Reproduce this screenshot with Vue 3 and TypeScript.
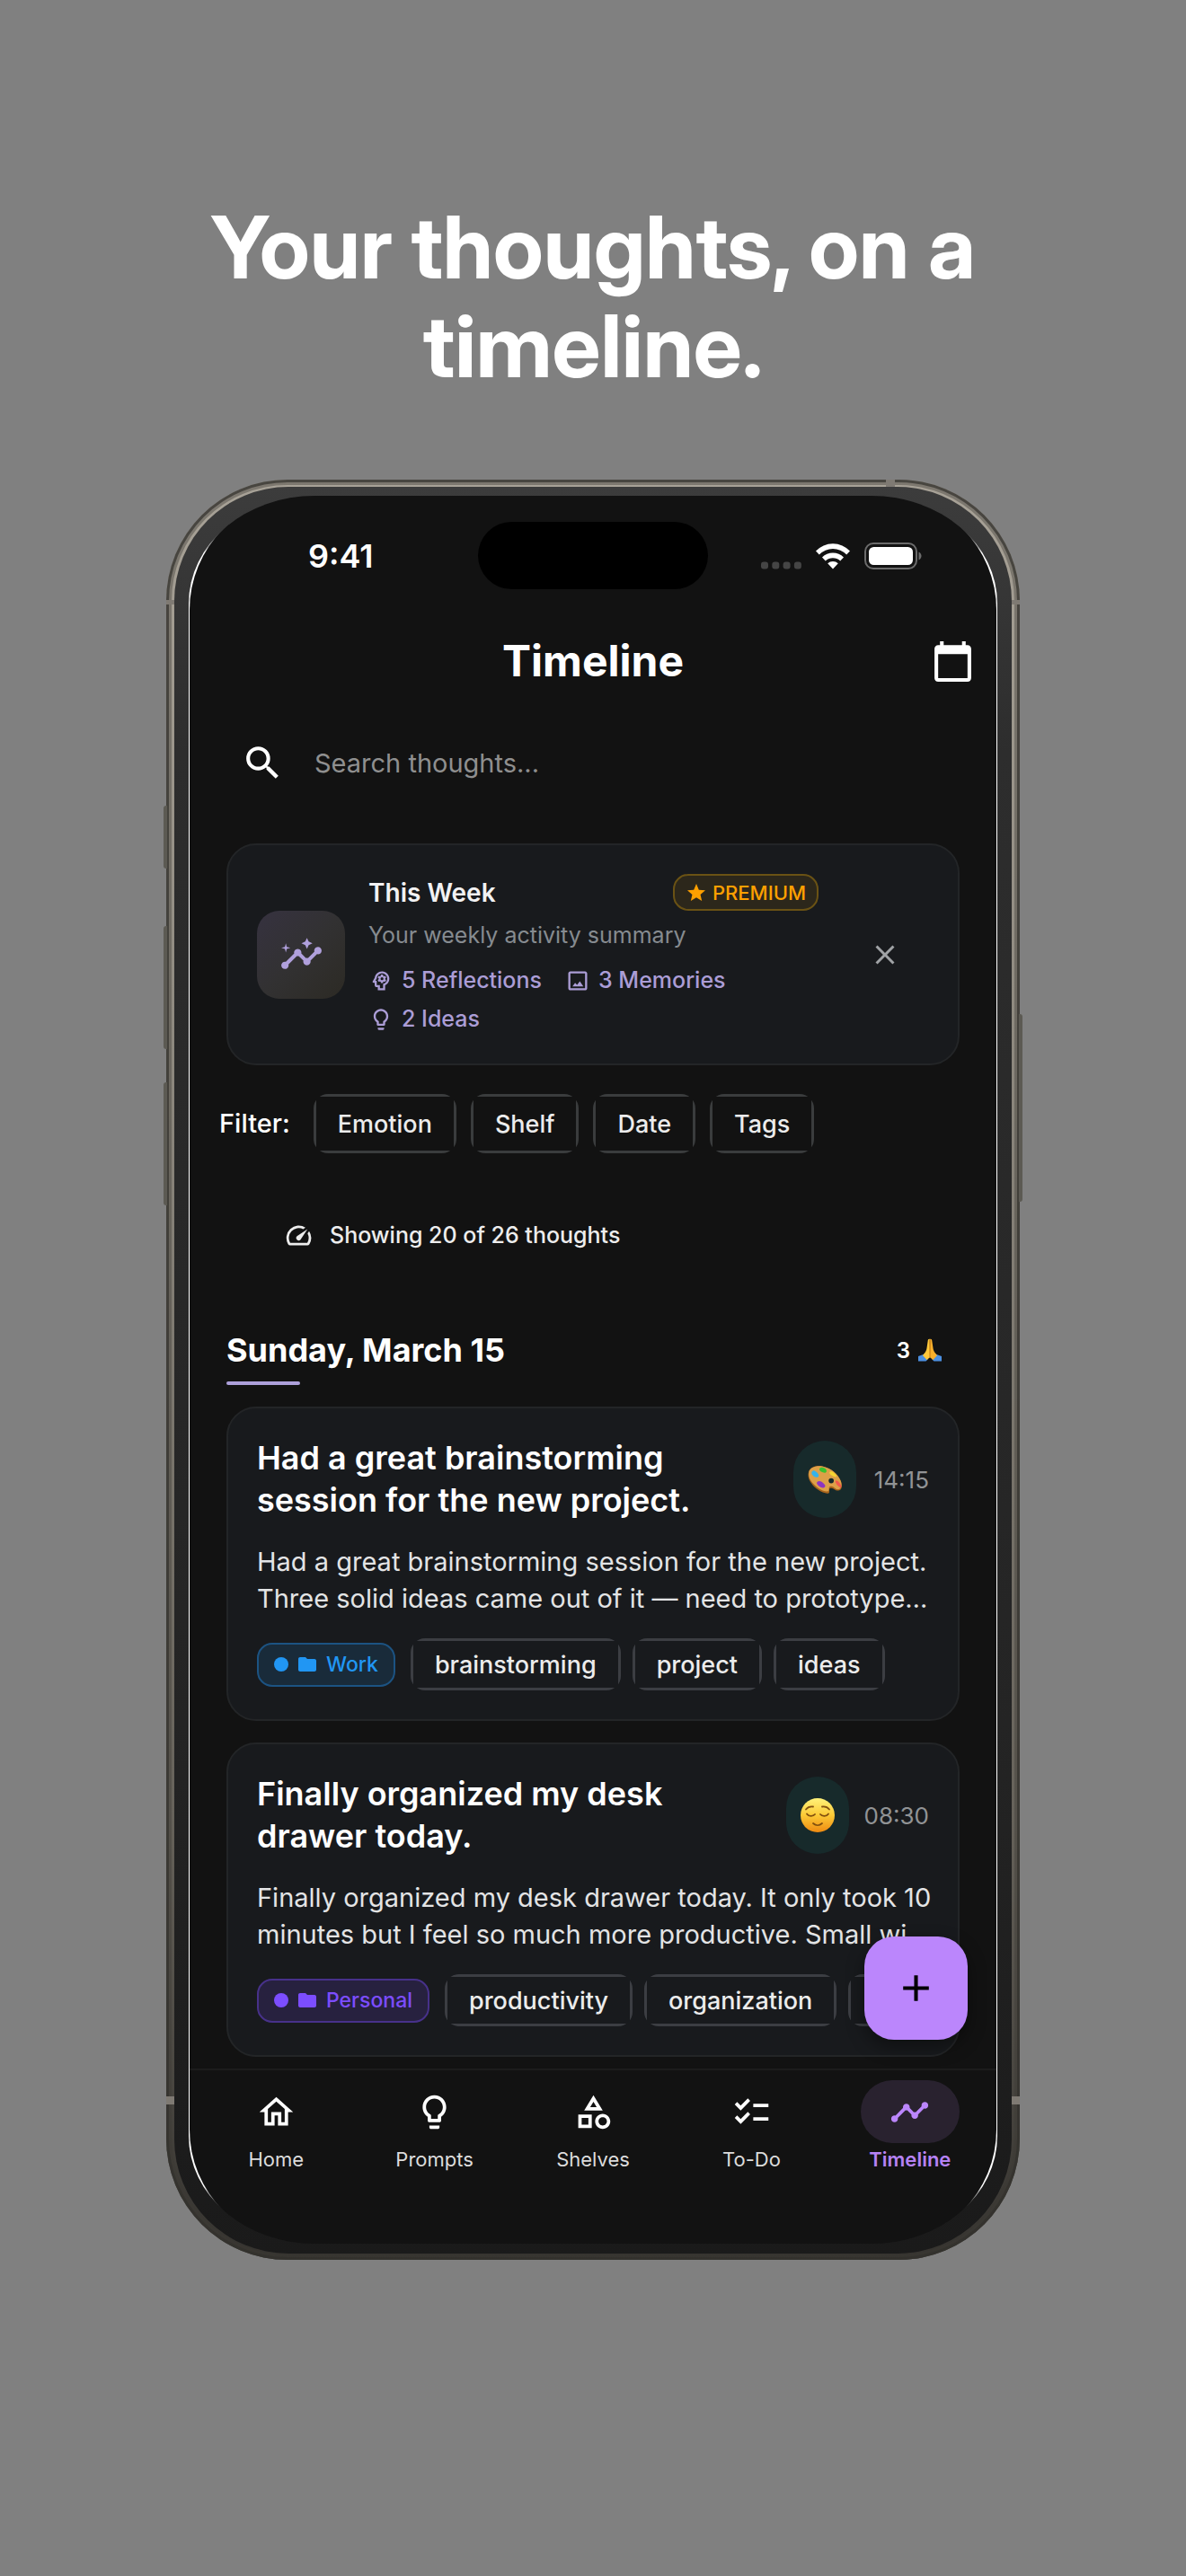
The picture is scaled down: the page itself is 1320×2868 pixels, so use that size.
<script setup lang="ts">
import { ref } from 'vue'

type Mood = 'palette' | 'relieved'

interface Thought {
  title: string[]
  body: string[]
  time: string
  mood: Mood
  shelf: string
  shelfTone: 'work' | 'personal'
  tags: string[]
  moreTags: boolean
}

const icons = {
  search:
    'M15.5 14h-.79l-.28-.27A6.471 6.471 0 0 0 16 9.5 6.5 6.5 0 1 0 9.5 16c1.61 0 3.09-.59 4.23-1.57l.27.28v.79l5 4.99L20.49 19l-4.99-5zm-6 0C7.01 14 5 11.99 5 9.5S7.01 5 9.5 5 14 7.01 14 9.5 11.99 14 9.5 14z',
  calendar:
    'M20 3h-1V1h-2v2H7V1H5v2H4c-1.1 0-2 .9-2 2v16c0 1.1.9 2 2 2h16c1.1 0 2-.9 2-2V5c0-1.1-.9-2-2-2zm0 18H4V8h16v13z',
  insights:
    'M21 8c-1.45 0-2.26 1.44-1.93 2.51l-3.55 3.56c-.3-.09-.74-.09-1.04 0l-2.55-2.55C12.27 10.45 11.46 9 10 9c-1.45 0-2.27 1.44-1.93 2.52l-4.56 4.55C2.44 15.74 1 16.55 1 18c0 1.1.9 2 2 2 1.45 0 2.26-1.44 1.93-2.51l4.55-4.56c.3.09.74.09 1.04 0l2.55 2.55C12.73 16.55 13.54 18 15 18c1.45 0 2.27-1.44 1.93-2.52l3.56-3.55C21.56 12.26 23 11.45 23 10c0-1.1-.9-2-2-2zM15 9l.94-2.07L18 6l-2.06-.93L15 3l-.92 2.07L12 6l2.08.93zM3.5 11 4 9l2-.5L4 8l-.5-2L3 8l-2 .5L3 9z',
  mind:
    'M19.94 9.06c-.43-3.27-3.23-5.86-6.53-6.05C13.27 3 13.14 3 13 3 9.47 3 6.57 5.61 6.08 9l-1.93 3.48c-.41.66.07 1.52.85 1.52h1v2c0 1.1.9 2 2 2h1v3h7v-4.68c2.62-1.25 4.35-4.08 3.94-7.26zm-5.05 5.57-.89.42V19h-3v-3H8v-4H6.7l1.33-2.33C8.21 7.06 10.35 5 13 5c2.76 0 5 2.24 5 5 0 2.09-1.29 3.88-3.11 4.63zM15.82 7.22l-1 .4c-.21-.16-.43-.29-.67-.39L14 6.17c-.02-.12-.13-.21-.25-.21h-1.6c-.13 0-.24.09-.26.21l-.15 1.06c-.24.1-.47.23-.67.39l-1-.4c-.11-.04-.24 0-.31.11l-.8 1.38c-.05.11-.03.25.07.33l.85.66c-.02.13-.04.26-.04.39s.01.26.03.39l-.84.66c-.1.08-.12.21-.06.32l.8 1.38c.06.11.19.16.31.12l.99-.4c.21.16.43.29.68.39l.14 1.06c.02.12.13.21.26.21h1.6c.12 0 .23-.09.26-.21l.14-1.06c.24-.1.47-.23.68-.39l.99.4c.12.05.25 0 .31-.12l.8-1.38c.06-.11.04-.24-.06-.32l-.83-.66c.02-.13.03-.26.03-.39 0-.14-.01-.27-.02-.39l.84-.66c.1-.08.12-.22.06-.33l-.8-1.38c-.06-.12-.18-.16-.31-.12zM13 11.4a1.4 1.4 0 1 1 0-2.8 1.4 1.4 0 0 1 0 2.8z',
  image:
    'M19 5v14H5V5h14m0-2H5c-1.1 0-2 .9-2 2v14c0 1.1.9 2 2 2h14c1.1 0 2-.9 2-2V5c0-1.1-.9-2-2-2zm-5 9.5-2.6 3.4-1.9-2L7 17.3h10.4L14 12.5z',
  bulb:
    'M9 21c0 .55.45 1 1 1h4c.55 0 1-.45 1-1v-1H9v1zm3-19C8.14 2 5 5.14 5 9c0 2.38 1.19 4.47 3 5.74V17c0 .55.45 1 1 1h6c.55 0 1-.45 1-1v-2.26c1.81-1.27 3-3.36 3-5.74 0-3.86-3.14-7-7-7zm2.85 11.1-.85.6V16h-4v-2.3l-.85-.6C7.8 12.16 7 10.63 7 9c0-2.76 2.24-5 5-5s5 2.24 5 5c0 1.63-.8 3.16-2.15 4.1z',
  star: 'M12 17.27 18.18 21l-1.64-7.03L22 9.24l-7.19-.61L12 2 9.19 8.63 2 9.24l5.46 4.73L5.82 21z',
  close:
    'M19 6.41 17.59 5 12 10.59 6.41 5 5 6.41 10.59 12 5 17.59 6.41 19 12 13.41 17.59 19 19 17.59 13.41 12z',
  speed:
    'm20.38 8.57-1.23 1.85a8 8 0 0 1-.22 7.58H5.07A8 8 0 0 1 15.58 6.85l1.85-1.23A10 10 0 0 0 3.35 19a2 2 0 0 0 1.72 1h13.85a2 2 0 0 0 1.74-1 10 10 0 0 0-.27-10.44zm-9.79 6.84a2 2 0 0 0 2.83 0l5.66-8.49-8.49 5.66a2 2 0 0 0 0 2.83z',
  folder:
    'M10 4H4c-1.1 0-1.99.9-1.99 2L2 18c0 1.1.9 2 2 2h16c1.1 0 2-.9 2-2V8c0-1.1-.9-2-2-2h-8l-2-2z',
  add: 'M19 13h-6v6h-2v-6H5v-2h6V5h2v6h6v2z',
  home: 'm12 5.69 5 4.5V18h-2v-6H9v6H7v-7.81l5-4.5M12 3 2 12h3v8h6v-6h2v6h6v-8h3L12 3z',
  shelves:
    'm12 2-5.5 9h11L12 2zm0 3.84L13.93 9h-3.87L12 5.84zM17.5 13c-2.49 0-4.5 2.01-4.5 4.5s2.01 4.5 4.5 4.5 4.5-2.01 4.5-4.5-2.01-4.5-4.5-4.5zm0 7c-1.38 0-2.5-1.12-2.5-2.5s1.12-2.5 2.5-2.5 2.5 1.12 2.5 2.5-1.12 2.5-2.5 2.5zM3 21.5h8v-8H3v8zm2-6h4v4H5v-4z',
  checklist:
    'M22 7h-9v2h9V7zm0 8h-9v2h9v-2zM5.54 11 2 7.46l1.41-1.41 2.12 2.12 4.24-4.24 1.41 1.41L5.54 11zm0 8L2 15.46l1.41-1.41 2.12 2.12 4.24-4.24 1.41 1.41L5.54 19z',
  timeline:
    'M23 8c0 1.1-.9 2-2 2-.18 0-.35-.02-.51-.07l-3.56 3.55c.05.16.07.34.07.52 0 1.1-.9 2-2 2s-2-.9-2-2c0-.18.02-.36.07-.52l-2.55-2.55c-.16.05-.34.07-.52.07s-.36-.02-.52-.07l-4.55 4.56c.05.16.07.33.07.51 0 1.1-.9 2-2 2s-2-.9-2-2 .9-2 2-2c.18 0 .35.02.51.07l4.56-4.55C8.02 9.36 8 9.18 8 9c0-1.1.9-2 2-2s2 .9 2 2c0 .18-.02.36-.07.52l2.55 2.55c.16-.05.34-.07.52-.07s.36.02.52.07l3.55-3.56C19.02 8.35 19 8.18 19 8c0-1.1.9-2 2-2s2 .9 2 2z',
}

const query = ref('')

const stats = [
  { icon: icons.mind, label: '5 Reflections' },
  { icon: icons.image, label: '3 Memories' },
  { icon: icons.bulb, label: '2 Ideas' },
]

const filters = ['Emotion', 'Shelf', 'Date', 'Tags']

const thoughts: Thought[] = [
  {
    title: ['Had a great brainstorming', 'session for the new project.'],
    body: [
      'Had a great brainstorming session for the new project.',
      'Three solid ideas came out of it — need to prototype…',
    ],
    time: '14:15',
    mood: 'palette',
    shelf: 'Work',
    shelfTone: 'work',
    tags: ['brainstorming', 'project', 'ideas'],
    moreTags: false,
  },
  {
    title: ['Finally organized my desk', 'drawer today.'],
    body: [
      'Finally organized my desk drawer today. It only took 10',
      'minutes but I feel so much more productive. Small wi…',
    ],
    time: '08:30',
    mood: 'relieved',
    shelf: 'Personal',
    shelfTone: 'personal',
    tags: ['productivity', 'organization'],
    moreTags: true,
  },
]

const tabs = [
  { icon: icons.home, label: 'Home' },
  { icon: icons.bulb, label: 'Prompts' },
  { icon: icons.shelves, label: 'Shelves' },
  { icon: icons.checklist, label: 'To-Do' },
  { icon: icons.timeline, label: 'Timeline' },
]
const activeTab = ref('Timeline')
</script>

<template>
  <div class="page">
    <h1 class="headline">Your thoughts, on a<br />timeline.</h1>

    <div class="phone">
      <i class="key key-action"></i>
      <i class="key key-up"></i>
      <i class="key key-down"></i>
      <i class="key key-power"></i>
      <i class="band band-top"></i>
      <i class="band band-left band-high"></i>
      <i class="band band-right band-high"></i>
      <i class="band band-left band-low"></i>
      <i class="band band-right band-low"></i>

      <div class="bezel">
        <div class="glass">
          <div class="screen">
            <div class="status">
              <span class="clock">9:41</span>
              <span class="island"></span>
              <span class="signals">
                <svg class="dots" viewBox="0 0 45 30">
                  <rect v-for="n in 4" :key="n" :x="(n - 1) * 12.3" y="21.5" width="8" height="8" rx="3" />
                </svg>
                <svg class="wifi" viewBox="0 0 40 30">
                  <path d="M1 9.5a26 26 0 0 1 38 0l-3.8 4a21 21 0 0 0-30.4 0z" />
                  <path d="M8 16.4a17 17 0 0 1 24 0l-3.8 4a12 12 0 0 0-16.4 0z" />
                  <path d="M14.2 23.2a8.5 8.5 0 0 1 11.6 0L20 29.5z" />
                </svg>
                <svg class="battery" viewBox="0 0 64 30">
                  <rect x="1" y="1" width="57" height="28" rx="9" fill="none" stroke="#6b6b6b" stroke-width="2" />
                  <rect x="5" y="5" width="49" height="20" rx="5.5" fill="#fff" />
                  <path d="M60.5 10.5c2 1 3 2.6 3 4.5s-1 3.5-3 4.5z" fill="#6b6b6b" />
                </svg>
              </span>
            </div>

            <main class="content">
              <header class="topbar">
                <h2>Timeline</h2>
                <button class="plain" type="button" aria-label="Pick a date">
                  <svg class="icon-lg" viewBox="0 0 24 24"><path :d="icons.calendar" /></svg>
                </button>
              </header>

              <label class="search">
                <svg class="icon-lg" viewBox="0 0 24 24"><path :d="icons.search" /></svg>
                <input v-model="query" type="text" placeholder="Search thoughts..." aria-label="Search thoughts" />
              </label>

              <section class="card week">
                <div class="week-icon">
                  <svg class="icon-lg" viewBox="0 0 24 24"><path :d="icons.insights" /></svg>
                </div>
                <div class="week-body">
                  <div class="week-top">
                    <h3>This Week</h3>
                    <span class="premium">
                      <svg viewBox="0 0 24 24"><path :d="icons.star" /></svg>PREMIUM
                    </span>
                  </div>
                  <p class="week-sub">Your weekly activity summary</p>
                  <ul class="stats">
                    <li v-for="stat in stats" :key="stat.label">
                      <svg viewBox="0 0 24 24"><path :d="stat.icon" fill-rule="evenodd" /></svg>{{ stat.label }}
                    </li>
                  </ul>
                </div>
                <button class="plain dismiss" type="button" aria-label="Dismiss">
                  <svg viewBox="0 0 24 24"><path :d="icons.close" /></svg>
                </button>
              </section>

              <div class="filters">
                <span class="filters-label">Filter:</span>
                <button v-for="name in filters" :key="name" class="chip" type="button">
                  <span>{{ name }}</span>
                </button>
              </div>

              <p class="count">
                <svg viewBox="0 0 24 24"><path :d="icons.speed" /></svg>Showing 20 of 26 thoughts
              </p>

              <section class="day">
                <header class="day-head">
                  <h3>Sunday, March 15</h3>
                  <span class="day-count">
                    3
                    <svg viewBox="0 0 26 26" role="img" aria-label="Folded hands">
                      <path d="M0 20 7 17.5l4 5.5-2.5 2.5H0zM26 20l-7-2.5-4 5.5 2.5 2.5H26z" fill="#4c8fe0" />
                      <path d="M12.8.8c-1.3-.4-2 .6-2.1 2L9.5 11c-.3 2-1 3.6-2.5 5.6l-2 2.4 4.5 5 3.5-2.8z" fill="#ffc83a" />
                      <path d="M13.2.8c1.3-.4 2 .6 2.1 2L16.5 11c.3 2 1 3.6 2.5 5.6l2 2.4-4.5 5-3.5-2.8z" fill="#f9b02b" />
                      <path d="M13 2v19" stroke="#c77a12" stroke-width="1" />
                    </svg>
                  </span>
                </header>
                <div class="day-rule"></div>

                <article v-for="thought in thoughts" :key="thought.time" class="card thought">
                  <div class="thought-head">
                    <h4>{{ thought.title[0] }}<br />{{ thought.title[1] }}</h4>
                    <span class="mood">
                      <svg v-if="thought.mood === 'palette'" viewBox="0 0 42 34" role="img" aria-label="Creative">
                        <path
                          d="M2 9C3 3 10 0 18 1.5c10 2 19 9 22 18 2 6 .5 10-3 10.5-4 .6-5.5-3.5-9-3-3.3.5-1 3.5-2 5.5-1.5 2.2-8 0-13-3.5C6 24 0 16 2 9z"
                          fill="#a8641c"
                        />
                        <path
                          d="M2.5 8C4 3 10 .5 18 1.5c10 2 18 8.5 21.5 17 2 5.5.8 9.3-2.5 10-4 .6-5.5-4-9-3.5-3.3.5-1.5 3.5-2.5 5.2-1.5 1.8-7.5 0-12.5-3.5C6 22 1 15 2.5 8z"
                          fill="#dda048"
                        />
                        <circle cx="28.5" cy="18.5" r="3" fill="#15292a" />
                        <path d="M6 8c2-3 4-1 6 1s3 5 0 5.5S4 11 6 8z" fill="#35b3ea" />
                        <path d="M15 4c2-2 4-1 6 0s3 4 1 5-9-2-7-5z" fill="#3cc32e" />
                        <path d="M27 8c2-1.5 5 1 7 3.5s-1 3-3 2-6-3.5-4-5.5z" fill="#f6d531" />
                        <path d="M34 18c2 0 5 3 6 6s-1 3-3 1-5-6-3-7z" fill="#f2594c" />
                        <path d="M12 20c2-2 5-1 7 1s4 4 1 5.5-10-4-8-6.5z" fill="#8d35c0" />
                      </svg>
                      <svg v-else viewBox="0 0 40 40" role="img" aria-label="Relieved">
                        <defs>
                          <linearGradient id="face" x1="0" y1="0" x2="0" y2="1">
                            <stop offset="0" stop-color="#fff27a" />
                            <stop offset=".5" stop-color="#fcca36" />
                            <stop offset="1" stop-color="#ee8a12" />
                          </linearGradient>
                        </defs>
                        <circle cx="20" cy="20" r="19" fill="url(#face)" />
                        <g fill="none" stroke="#82500f" stroke-width="1.8" stroke-linecap="round">
                          <path d="M7 13.5c2-2.5 5-3.5 8-3M33 13.5c-2-2.5-5-3.5-8-3" />
                          <path d="M8 18.5c2 3 7 3 9 .5M32 18.5c-2 3-7 3-9 .5" />
                          <path d="M15 29c3 2.8 7 2.8 10 0" />
                        </g>
                      </svg>
                    </span>
                    <time>{{ thought.time }}</time>
                  </div>
                  <p class="thought-body">{{ thought.body[0] }}<br />{{ thought.body[1] }}</p>
                  <div class="tags">
                    <span class="shelf" :class="thought.shelfTone">
                      <i></i>
                      <svg viewBox="0 0 24 24"><path :d="icons.folder" /></svg>
                      <span>{{ thought.shelf }}</span>
                    </span>
                    <button v-for="tag in thought.tags" :key="tag" class="chip chip-tag" type="button">
                      <span>{{ tag }}</span>
                    </button>
                    <span v-if="thought.moreTags" class="chip chip-tag chip-more"><span></span></span>
                  </div>
                </article>
              </section>

              <button class="fab" type="button" aria-label="New thought">
                <svg class="icon-lg" viewBox="0 0 24 24"><path :d="icons.add" /></svg>
              </button>
            </main>

            <nav class="tabs">
              <button
                v-for="tab in tabs"
                :key="tab.label"
                type="button"
                class="tab"
                :class="{ active: tab.label === activeTab }"
                @click="activeTab = tab.label"
              >
                <span class="pill">
                  <svg viewBox="0 0 24 24"><path :d="tab.icon" /></svg>
                </span>
                {{ tab.label }}
              </button>
            </nav>
          </div>
        </div>
      </div>
    </div>
  </div>
</template>

<style>
body {
  margin: 0;
  background: #808080;
}
</style>

<style scoped>
.page {
  box-sizing: border-box;
  min-height: 100vh;
  padding: 220px 185px 120px;
  background: #808080;
  font-family: Inter, Roboto, 'Liberation Sans', sans-serif;
  color: #fff;
}

h1,
h2,
h3,
h4,
p,
ul {
  margin: 0;
  padding: 0;
}

button,
input {
  font: inherit;
  color: inherit;
  border: 0;
  background: none;
  margin: 0;
  padding: 0;
}

svg {
  display: block;
  flex: none;
  fill: currentColor;
}

.icon-lg {
  width: 49px;
  height: 49px;
}

.headline {
  font-family: 'Inter Display', Inter, Roboto, sans-serif;
  font-size: 96px;
  line-height: 110px;
  font-weight: 700;
  text-align: center;
  white-space: nowrap;
}

/* Device body */
.phone {
  position: relative;
  margin-top: 94px;
  padding: 8px 9px 7px;
  border-radius: 135px;
  background: linear-gradient(#a8a297, #8f8a80 30%, #66625a 75%, #35332f);
  box-shadow:
    inset 0 0 0 3px rgba(50, 48, 44, 0.7),
    inset 0 0 0 6px rgba(60, 58, 52, 0.4);
}

.bezel {
  padding: 10px 16px 11px;
  border-radius: 127px;
  background: linear-gradient(#3c3c3c, #2d2d2d 15%, #242424 70%, #1a1a1a);
}

/* The bright rim only shows along the sides and the lower part of each corner */
.glass {
  overflow: hidden;
  padding: 0 1px;
  border-radius: 140px / 120px;
  background: linear-gradient(
    transparent 40px,
    #fff 64px,
    #fff calc(100% - 64px),
    transparent calc(100% - 40px)
  );
}

.screen {
  border-radius: 127px;
  overflow: hidden;
  background: #121212;
}

.key {
  position: absolute;
  width: 4px;
  background: #5c5a53;
}

.key-action,
.key-up,
.key-down {
  left: -3px;
  border-radius: 3px 0 0 3px;
}

.key-action {
  top: 363px;
  height: 70px;
}

.key-up {
  top: 497px;
  height: 137px;
}

.key-down {
  top: 671px;
  height: 137px;
}

.key-power {
  right: -3px;
  top: 595px;
  height: 209px;
  border-radius: 0 3px 3px 0;
}

.band {
  position: absolute;
  background: #7f7a73;
}

.band-top {
  top: 0;
  right: 139px;
  width: 10px;
  height: 8px;
}

.band-left {
  left: 0;
  width: 9px;
}

.band-right {
  right: 0;
  width: 9px;
}

.band-high {
  top: 134px;
  height: 5px;
}

.band-low {
  bottom: 173px;
  height: 9px;
}

/* Status bar */
.status {
  display: grid;
  grid-template-columns: 1fr 256px 1fr;
  align-items: center;
  padding-top: 29px;
}

.clock {
  padding-left: 132px;
  font-size: 36px;
  line-height: 44px;
  font-weight: 600;
}

.island {
  height: 75px;
  border-radius: 38px;
  background: #000;
}

.signals {
  display: flex;
  justify-content: flex-end;
  gap: 15px;
  padding-right: 83px;
}

.signals svg {
  height: 30px;
}

.dots {
  width: 45px;
  fill: #454545;
}

.wifi {
  width: 40px;
}

.battery {
  width: 64px;
}

/* App content */
.content {
  position: relative;
  padding: 32px 41px 13px;
}

.plain {
  display: grid;
  place-items: center;
}

.topbar {
  display: grid;
  grid-template-columns: 1fr auto 1fr;
  align-items: center;
  height: 96px;
  margin-right: -17px;
  margin-left: -17px;
}

.topbar h2 {
  grid-column: 2;
  font-size: 48px;
  line-height: 58px;
  font-weight: 700;
}

.topbar .plain {
  justify-self: end;
}

.search {
  display: flex;
  align-items: center;
  gap: 33px;
  height: 98px;
  margin-top: 16px;
  padding: 0 16px;
}

.search input {
  flex: 1;
  min-width: 0;
  height: 56px;
  outline: none;
  font-size: 29px;
}

.search input::placeholder {
  color: #8f8f8f;
  opacity: 1;
}

.card {
  box-sizing: border-box;
  border: 2px solid #232527;
  border-radius: 33px;
  background: #181a1d;
}

.week {
  display: flex;
  align-items: center;
  margin-top: 41px;
  padding: 32px 45px 32px 32px;
}

.week-icon {
  display: grid;
  place-items: center;
  width: 98px;
  height: 98px;
  border-radius: 25px;
  background: linear-gradient(135deg, #363240, #323132 50%, #2c2a24);
  color: #b0a0dc;
}

.week-body {
  flex: 1;
  margin-left: 26px;
}

.week-top {
  display: flex;
  align-items: center;
  justify-content: space-between;
}

.week-top h3 {
  font-size: 28px;
  line-height: 40px;
  font-weight: 600;
  color: #f2f2f3;
}

.premium {
  display: flex;
  align-items: center;
  gap: 6px;
  box-sizing: border-box;
  height: 41px;
  padding: 0 12px;
  border: 2px solid #6a5214;
  border-radius: 17px;
  background: #2c271b;
  color: #ffa000;
  font-size: 22px;
  font-weight: 500;
}

.premium svg {
  width: 24px;
  height: 24px;
}

.week-sub {
  margin-top: 10px;
  font-size: 25px;
  line-height: 34px;
  color: #868b90;
}

.stats {
  display: flex;
  flex-wrap: wrap;
  gap: 8px 26px;
  margin-top: 16px;
  list-style: none;
}

.stats li {
  display: flex;
  align-items: center;
  gap: 9px;
  font-size: 25px;
  line-height: 35px;
  font-weight: 500;
  color: #ab9dd6;
}

.stats svg {
  width: 28px;
  height: 28px;
}

.dismiss {
  width: 73px;
  height: 73px;
  margin-left: 37px;
  color: #a0a3a6;
}

.dismiss svg {
  width: 36px;
  height: 36px;
}

.filters {
  display: flex;
  align-items: center;
  gap: 16px;
  margin: 32px 0 0 -8px;
}

.filters-label {
  margin-right: 10px;
  font-size: 29px;
  line-height: 40px;
  font-weight: 500;
}

/* A rounded plate with a square-cornered face, so only the four edges stay visible */
.chip {
  box-sizing: border-box;
  height: 66px;
  padding: 3px;
  border-radius: 16px;
  background: #3a3c3d;
  font-size: 27px;
  font-weight: 500;
  color: #ececec;
}

.chip span {
  display: flex;
  align-items: center;
  height: 100%;
  padding: 0 24px;
  background: #121212;
}

.chip-tag {
  height: 58px;
  background: #3c3e43;
}

.chip-tag span {
  background: #181a1d;
}

.chip-more {
  width: 90px;
}

.count {
  display: flex;
  align-items: center;
  gap: 18px;
  margin-top: 66px;
  padding-left: 64px;
  font-size: 25px;
  line-height: 50px;
  font-weight: 500;
  color: #ededed;
}

.count svg {
  width: 33px;
  height: 33px;
}

.day {
  margin-top: 81px;
}

.day-head {
  display: flex;
  align-items: center;
  justify-content: space-between;
  padding-right: 20px;
}

.day-head h3 {
  font-size: 36px;
  line-height: 44px;
  font-weight: 700;
}

.day-count {
  display: flex;
  align-items: center;
  gap: 9px;
  font-size: 24px;
  font-weight: 600;
}

.day-count svg {
  width: 26px;
  height: 26px;
}

.day-rule {
  width: 82px;
  height: 4px;
  margin: 13px 0 24px;
  border-radius: 2px;
  background: #ada0da;
}

.thought + .thought {
  margin-top: 24px;
}

.thought {
  padding: 32px;
}

.thought-head {
  display: flex;
  align-items: center;
}

.thought-head h4 {
  flex: 1;
  font-size: 36px;
  line-height: 47px;
  font-weight: 600;
  white-space: nowrap;
}

.mood {
  display: grid;
  place-items: center;
  width: 70px;
  height: 86px;
  border-radius: 35px;
  background: #172a2b;
}

.mood svg {
  width: 40px;
}

.thought-head time {
  min-width: 64px;
  margin-left: 17px;
  font-size: 26px;
  text-align: right;
  color: #919395;
}

.thought-body {
  margin-top: 24px;
  font-size: 29px;
  line-height: 41px;
  color: #e3e4e5;
  white-space: nowrap;
}

.tags {
  display: flex;
  align-items: center;
  gap: 13px;
  margin-top: 24px;
}

.shelf {
  display: flex;
  align-items: center;
  box-sizing: border-box;
  height: 49px;
  margin-right: 4px;
  padding: 0 17px;
  gap: 9px;
  border: 2px solid;
  border-radius: 17px;
  font-size: 23px;
  font-weight: 500;
}

.shelf i {
  width: 16px;
  height: 16px;
  border-radius: 50%;
  background: currentColor;
}

.shelf svg {
  width: 24px;
  height: 24px;
}

.shelf.work {
  color: #2196f3;
  background: #192b3a;
  border-color: #1c5382;
}

.shelf.personal {
  color: #7c4dff;
  background: #27213f;
  border-color: #47318a;
}

.fab {
  position: absolute;
  right: 32px;
  bottom: 32px;
  display: grid;
  place-items: center;
  width: 115px;
  height: 115px;
  border-radius: 33px;
  background: #bb86fc;
  color: #000;
  box-shadow: 0 8px 20px rgba(0, 0, 0, 0.4);
}

/* Bottom navigation */
.tabs {
  display: flex;
  padding: 11px 8px 80px;
  border-top: 2px solid #1c1c1c;
}

.tab {
  flex: 1;
  display: flex;
  flex-direction: column;
  align-items: center;
  gap: 4px;
  font-size: 22px;
  line-height: 28px;
  color: #dcdcdc;
}

.pill {
  display: grid;
  place-items: center;
  width: 110px;
  height: 70px;
  border-radius: 35px;
  color: #fff;
}

.pill svg {
  width: 45px;
  height: 45px;
}

.tab.active {
  color: #b682f5;
  font-weight: 600;
}

.active .pill {
  background: #29222f;
  color: #bb86fc;
}
</style>
